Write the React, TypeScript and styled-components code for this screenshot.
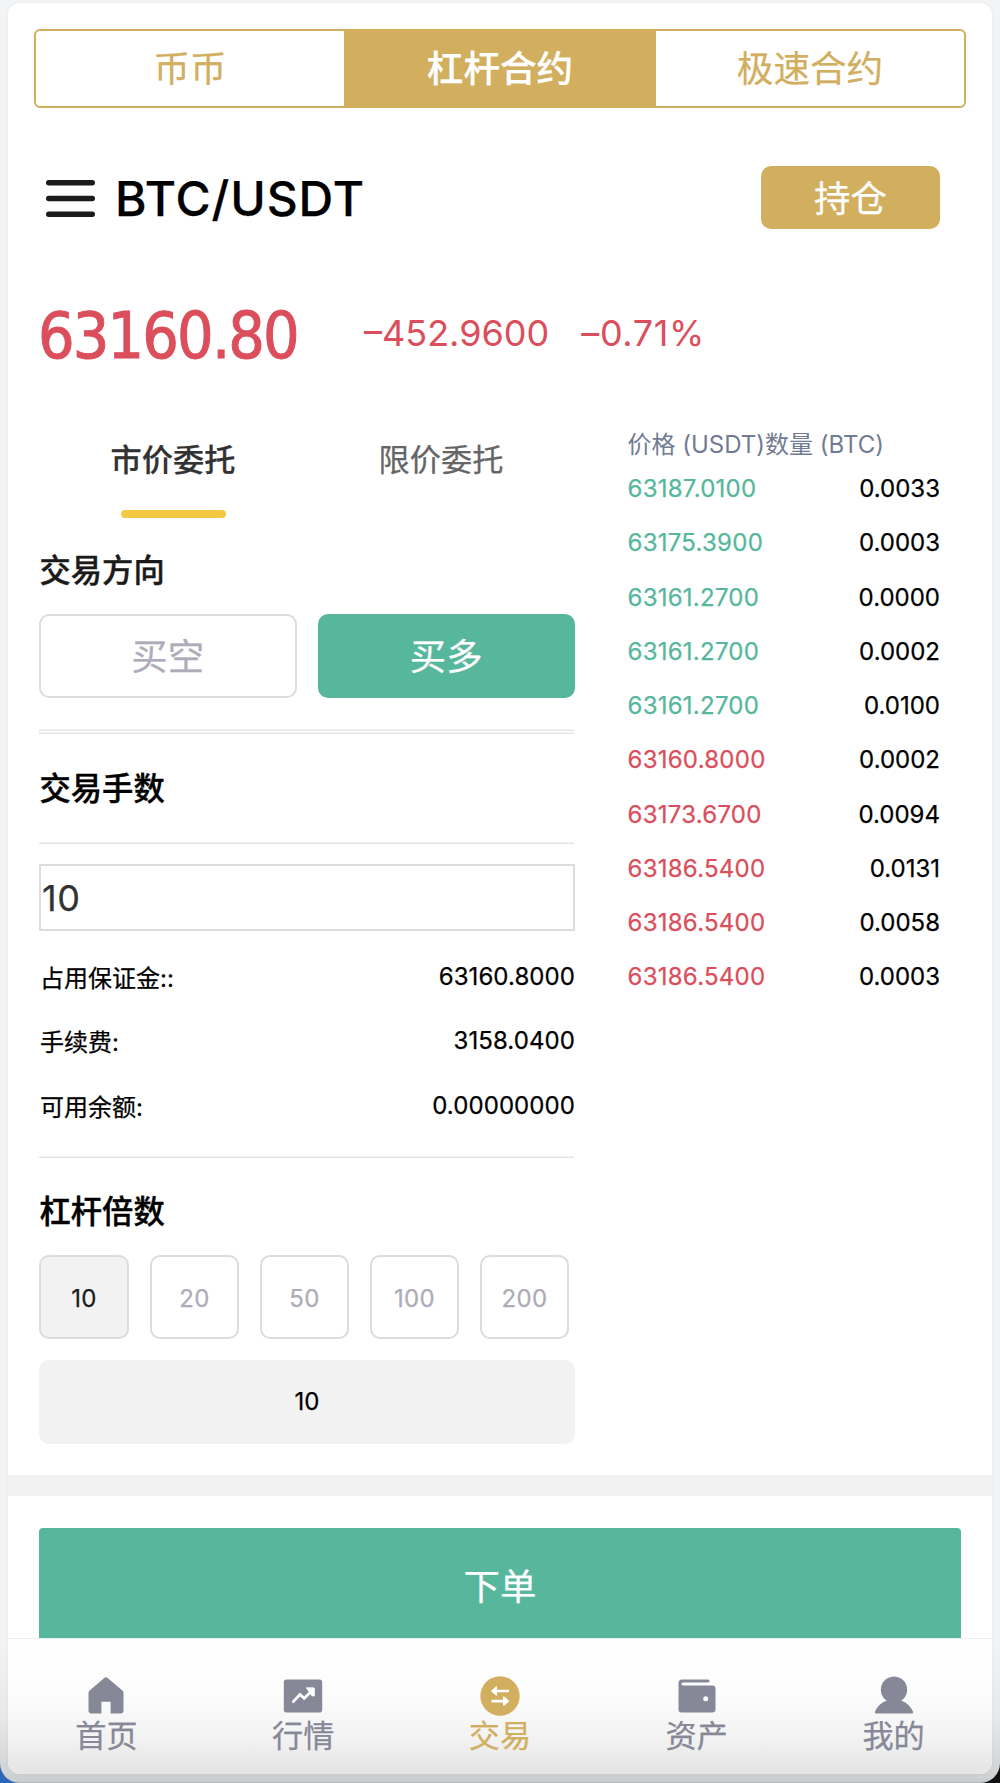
import React, { useState } from "react";
import styled, { createGlobalStyle, css } from "styled-components";

const gold = "#d2ae5f";
const green = "#56b79c";
const red = "#db4e5b";
const muted = "#adacb8";
const line = "#dbdbe0";
const navGray = "#878897";

const GlobalStyle = createGlobalStyle`
  * { box-sizing: border-box; }
  html, body { margin: 0; padding: 0; }
  body {
    background: linear-gradient(90deg, #2a67b8 0 50%, #111 50% 100%);
    font-family: Inter, "Noto Sans CJK SC", sans-serif;
    color: #000;
    -webkit-text-stroke: 0.25px currentColor;
  }
  button, input { font: inherit; color: inherit; margin: 0; padding: 0; background: none; border: 0; outline: 0; }
`;

const WindowFrame = styled.div`
  width: 1000px;
  height: 1783px;
  padding: 3px 8px 0;
  border-radius: 0 0 20px 20px;
  background: linear-gradient(180deg, #f3f4f6 0, #f3f4f6 1640px, #e6e8ea 1720px, #d0d2d4 1774px, #cbcdcf 1781px, #b4b5b7 1783px);
`;

const Panel = styled.main`
  height: 1771px;
  overflow: hidden;
  display: flex;
  flex-direction: column;
  background: #fff;
  border-radius: 12px;
  box-shadow: 0 0 4px rgba(0, 0, 0, 0.06);
`;

const Segments = styled.div`
  flex: none;
  display: grid;
  grid-template-columns: 308px 312px 308px;
  height: 79px;
  margin: 26px 26px 0;
  border: 2px solid ${gold};
  border-radius: 6px;
`;

const Segment = styled.button<{ $on?: boolean }>`
  font-size: 36.6px;
  line-height: 73px;
  padding-top: 2px;
  white-space: nowrap;
  color: ${(p) => (p.$on ? "#fff" : gold)};
  background: ${(p) => (p.$on ? gold : "transparent")};
  font-weight: ${(p) => (p.$on ? 500 : 400)};
`;

const Header = styled.header`
  flex: none;
  display: flex;
  align-items: center;
  height: 179px;
  padding: 0 52px 0 38px;
`;

const Pair = styled.h1`
  margin: 2px auto 0 20px;
  font-size: 48px;
  font-weight: 500;
  line-height: 60px;
  letter-spacing: 0.9px;
`;

const PositionButton = styled.button`
  width: 179px;
  height: 63px;
  border-radius: 10px;
  background: ${gold};
  color: #fff;
  font-size: 36.4px;
  line-height: 60px;
  padding-top: 3px;
`;

const Quote = styled.div`
  flex: none;
  display: flex;
  align-items: center;
  height: 93px;
  padding-left: 30px;
  color: ${red};
`;

const LastPrice = styled.span`
  width: 326px;
  padding-top: 4px;
  font-family: "DejaVu Sans Condensed", "DejaVu Sans", sans-serif;
  font-stretch: condensed;
  font-size: 64px;
  line-height: 76px;
  letter-spacing: -1.85px;
  -webkit-text-stroke-width: 1px;
`;

const Change = styled.span<{ $spacing: number }>`
  font-size: 36px;
  line-height: 44px;
  margin-right: 32px;
  padding-bottom: 1px;
  letter-spacing: ${(p) => p.$spacing}px;
  -webkit-text-stroke-width: 0;
`;

const Body = styled.div`
  flex: none;
  display: flex;
  justify-content: space-between;
  height: 1095px;
  padding: 0 52px 0 31px;
`;

const Form = styled.section`
  width: 536px;
`;

const OrderTabs = styled.div`
  display: grid;
  grid-template-columns: 1fr 1fr;
  height: 138px;
  padding-top: 40px;
`;

const OrderTab = styled.button<{ $on?: boolean }>`
  display: flex;
  flex-direction: column;
  align-items: center;
  gap: 10px;
  font-size: 31.2px;
  line-height: 80px;
  color: ${(p) => (p.$on ? "#323233" : "#646566")};
  font-weight: ${(p) => (p.$on ? 500 : 400)};
  &::after {
    content: "";
    width: 105px;
    height: 8px;
    border-radius: 4px;
    background: ${(p) => (p.$on ? "#f5c844" : "transparent")};
  }
`;

const Title = styled.h2<{ $height: number; $top?: number; $color?: string }>`
  margin: 0;
  padding: ${(p) => p.$top ?? 0}px 0 0 0.5px;
  height: ${(p) => p.$height}px;
  line-height: ${(p) => p.$height - (p.$top ?? 0)}px;
  font-size: 31.3px;
  font-weight: 500;
  color: ${(p) => p.$color ?? "#000"};
  -webkit-text-stroke-width: 0.4px;
`;

const Directions = styled.div`
  display: grid;
  grid-template-columns: 1fr 1fr;
  gap: 21px;
  margin-bottom: 31px;
`;

const boxed = css`
  height: 84px;
  border: 2px solid ${line};
  border-radius: 10px;
`;

const Direction = styled.button<{ $on?: boolean }>`
  ${boxed}
  font-size: 36.4px;
  line-height: 78px;
  padding-top: 2px;
  color: ${(p) => (p.$on ? "#fff" : muted)};
  ${(p) => p.$on && `background: ${green}; border-color: ${green};`}
`;

const Rule = styled.hr<{ $gap?: number }>`
  margin: 0 1px ${(p) => p.$gap ?? 0}px 0;
  border: 0;
  height: 2px;
  background: linear-gradient(180deg, #f1f1f1 50%, #e6e6e6 50%);
`;

const AmountInput = styled.input`
  display: block;
  width: 100%;
  height: 67px;
  padding: 0 1px;
  border: 2px solid #dcdcdc;
  font-size: 36px;
  color: #323233;
  letter-spacing: 0.6px;
`;

const Facts = styled.dl`
  display: grid;
  grid-auto-rows: 64.67px;
  margin: 13px 0 18px;
`;

const Fact = styled.div`
  display: flex;
  justify-content: space-between;
  align-items: center;
  font-size: 24px;
`;

const FactName = styled.dt`
  padding-left: 1px;
`;

const FactValue = styled.dd`
  margin: 0;
  letter-spacing: 0.08px;
`;

const Leverages = styled.div`
  display: grid;
  grid-template-columns: 90px repeat(4, 89px);
  gap: 21px;
  margin-bottom: 21px;
`;

const Leverage = styled.button<{ $on?: boolean }>`
  ${boxed}
  font-size: 24px;
  padding-top: 3px;
  letter-spacing: 0.3px;
  color: ${(p) => (p.$on ? "#1a1a1a" : muted)};
  background: ${(p) => (p.$on ? "#f2f2f2" : "#fff")};
`;

const LeverageValue = styled.div`
  height: 84px;
  border-radius: 10px;
  background: #f2f2f2;
  font-size: 24px;
  line-height: 84px;
  text-align: center;
`;

const Book = styled.section`
  width: 313px;
  padding-top: 48px;
  font-size: 24px;
`;

const BookHead = styled.div`
  height: 33.5px;
  line-height: 34px;
  padding-left: 0.5px;
  white-space: nowrap;
  color: #717b94;
  -webkit-text-stroke-width: 0;
`;

const BookRow = styled.div`
  display: flex;
  justify-content: space-between;
  align-items: center;
  height: 54.25px;
`;

const BookPrice = styled.span<{ $buy?: boolean }>`
  padding-left: 0.5px;
  letter-spacing: 0.25px;
  color: ${(p) => (p.$buy ? green : red)};
`;

const Band = styled.div`
  flex: none;
  height: 21px;
  background: #f2f2f2;
`;

const Submit = styled.button`
  flex: none;
  height: 110px;
  margin: 32px 31px 0;
  border-radius: 4px 4px 0 0;
  background: ${green};
  color: #fff;
  font-size: 36.4px;
  padding-top: 1px;
`;

const TabBar = styled.nav`
  flex: 1;
  display: grid;
  grid-template-columns: repeat(5, 1fr);
  border-top: 1px solid #ebedf0;
  background: linear-gradient(180deg, #fff 0, #fdfdfd 38%, #f3f3f3 72%, #e4e4e4 100%);
`;

const TabItem = styled.a<{ $on?: boolean }>`
  display: flex;
  flex-direction: column;
  align-items: center;
  padding-top: 37px;
  font-size: 31.2px;
  line-height: 40px;
  color: ${(p) => (p.$on ? gold : navGray)};
  svg { display: block; }
`;

const MenuGlyph = styled.svg`
  display: block;
  margin-top: 1px;
`;

const MenuIcon = () => (
  <MenuGlyph width="49" height="37" viewBox="0 0 49 37" fill="#1b1b1b">
    <rect y="0" width="49" height="5.4" rx="2.7" />
    <rect y="15.8" width="49" height="5.4" rx="2.7" />
    <rect y="31.6" width="49" height="5.4" rx="2.7" />
  </MenuGlyph>
);

const icons: Record<string, React.ReactNode> = {
  home: (
    <path d="M18.3 1.9a2.6 2.6 0 0 1 3.4 0L36.4 14.4a3 3 0 0 1 1.1 2.3V34.5a3 3 0 0 1-3 3H24.6V25.800h-9.200V37.500H5.500a3 3 0 0 1-3-3V16.700a3 3 0 0 1 1.100-2.300Z" />
  ),
  chart: (
    <>
      <rect x="0.800" y="3.500" width="38.400" height="33" rx="2.800" />
      <path d="M10.300 25.700 17 18.500l4.200 3.800 8-7.800" fill="none" stroke="#fff" strokeWidth="2.700" strokeLinecap="round" />
      <path d="M23.300 11.800h7.300a.8.800 0 0 1 .8.800v7.500l-2.500-.300Z" fill="#fff" stroke="#fff" strokeWidth="0.800" strokeLinejoin="round" />
    </>
  ),
  swap: (
    <>
      <circle cx="20" cy="20" r="19.700" />
      <g stroke="#fff" fill="#fff" strokeLinejoin="round">
        <path d="M15 15h14M11.500 25.100h14" fill="none" strokeWidth="2.700" />
        <path d="M11.800 15l4.600-4v8ZM28.300 25.100l-4.600-4v8Z" strokeWidth="1.400" />
      </g>
    </>
  ),
  wallet: (
    <>
      <path d="M5 3.500h26a1.500 1.500 0 0 1 0 3H6a1.500 1.500 0 0 0 0 3h29.500a3 3 0 0 1 3 3v21a3 3 0 0 1-3 3h-31a3 3 0 0 1-3-3V7A3.500 3.500 0 0 1 5 3.500Z" />
      <circle cx="28.700" cy="22.800" r="2.500" fill="#fff" />
    </>
  ),
  user: (
    <path d="M20 .4a13.300 13.300 0 0 1 7.300 24.400c5 1.400 9.500 5.500 11.700 11a1.300 1.300 0 0 1-1.200 1.800H2.200A1.300 1.300 0 0 1 1 35.800c2.200-5.500 6.700-9.600 11.700-11A13.300 13.300 0 0 1 20 .400Z" />
  ),
};

const NavIcon = ({ name }: { name: string }) => (
  <svg width="40" height="40" viewBox="0 0 40 40" fill="currentColor">
    {icons[name]}
  </svg>
);

const book = [
  ["63187.0100", "0.0033"],
  ["63175.3900", "0.0003"],
  ["63161.2700", "0.0000"],
  ["63161.2700", "0.0002"],
  ["63161.2700", "0.0100"],
  ["63160.8000", "0.0002"],
  ["63173.6700", "0.0094"],
  ["63186.5400", "0.0131"],
  ["63186.5400", "0.0058"],
  ["63186.5400", "0.0003"],
];

const facts = [
  ["占用保证金::", "63160.8000"],
  ["手续费:", "3158.0400"],
  ["可用余额:", "0.00000000"],
];

const nav = [
  ["home", "首页"],
  ["chart", "行情"],
  ["swap", "交易"],
  ["wallet", "资产"],
  ["user", "我的"],
];

export default function App() {
  const [leverage, setLeverage] = useState(10);
  const [lots, setLots] = useState("10");

  return (
    <>
      <GlobalStyle />
      <WindowFrame>
        <Panel>
          <Segments>
            <Segment>币币</Segment>
            <Segment $on>杠杆合约</Segment>
            <Segment>极速合约</Segment>
          </Segments>
          <Header>
            <MenuIcon />
            <Pair>BTC/USDT</Pair>
            <PositionButton>持仓</PositionButton>
          </Header>
          <Quote>
            <LastPrice>63160.80</LastPrice>
            <Change $spacing={0}>–452.9600</Change>
            <Change $spacing={0.6}>–0.71%</Change>
          </Quote>
          <Body>
            <Form>
              <OrderTabs>
                <OrderTab $on>市价委托</OrderTab>
                <OrderTab>限价委托</OrderTab>
              </OrderTabs>
              <Title $height={96} $top={11} $color="#1a1a1a">交易方向</Title>
              <Directions>
                <Direction>买空</Direction>
                <Direction $on>买多</Direction>
              </Directions>
              <Rule $gap={1} />
              <Rule />
              <Title $height={108} $top={2}>交易手数</Title>
              <Rule $gap={20} />
              <AmountInput value={lots} onChange={(e) => setLots(e.target.value)} />
              <Facts>
                {facts.map(([name, value]) => (
                  <Fact key={name}>
                    <FactName>{name}</FactName>
                    <FactValue>{value}</FactValue>
                  </Fact>
                ))}
              </Facts>
              <Rule />
              <Title $height={97} $top={12}>杠杆倍数</Title>
              <Leverages>
                {[10, 20, 50, 100, 200].map((n) => (
                  <Leverage key={n} $on={n === leverage} onClick={() => setLeverage(n)}>
                    {n}
                  </Leverage>
                ))}
              </Leverages>
              <LeverageValue>{leverage}</LeverageValue>
            </Form>
            <Book>
              <BookHead>价格 (USDT)数量 (BTC)</BookHead>
              {book.map(([price, amount], i) => (
                <BookRow key={i}>
                  <BookPrice $buy={i < 5}>{price}</BookPrice>
                  <span>{amount}</span>
                </BookRow>
              ))}
            </Book>
          </Body>
          <Band />
          <Submit>下单</Submit>
          <TabBar>
            {nav.map(([icon, label]) => (
              <TabItem key={icon} $on={icon === "swap"}>
                <NavIcon name={icon} />
                {label}
              </TabItem>
            ))}
          </TabBar>
        </Panel>
      </WindowFrame>
    </>
  );
}
